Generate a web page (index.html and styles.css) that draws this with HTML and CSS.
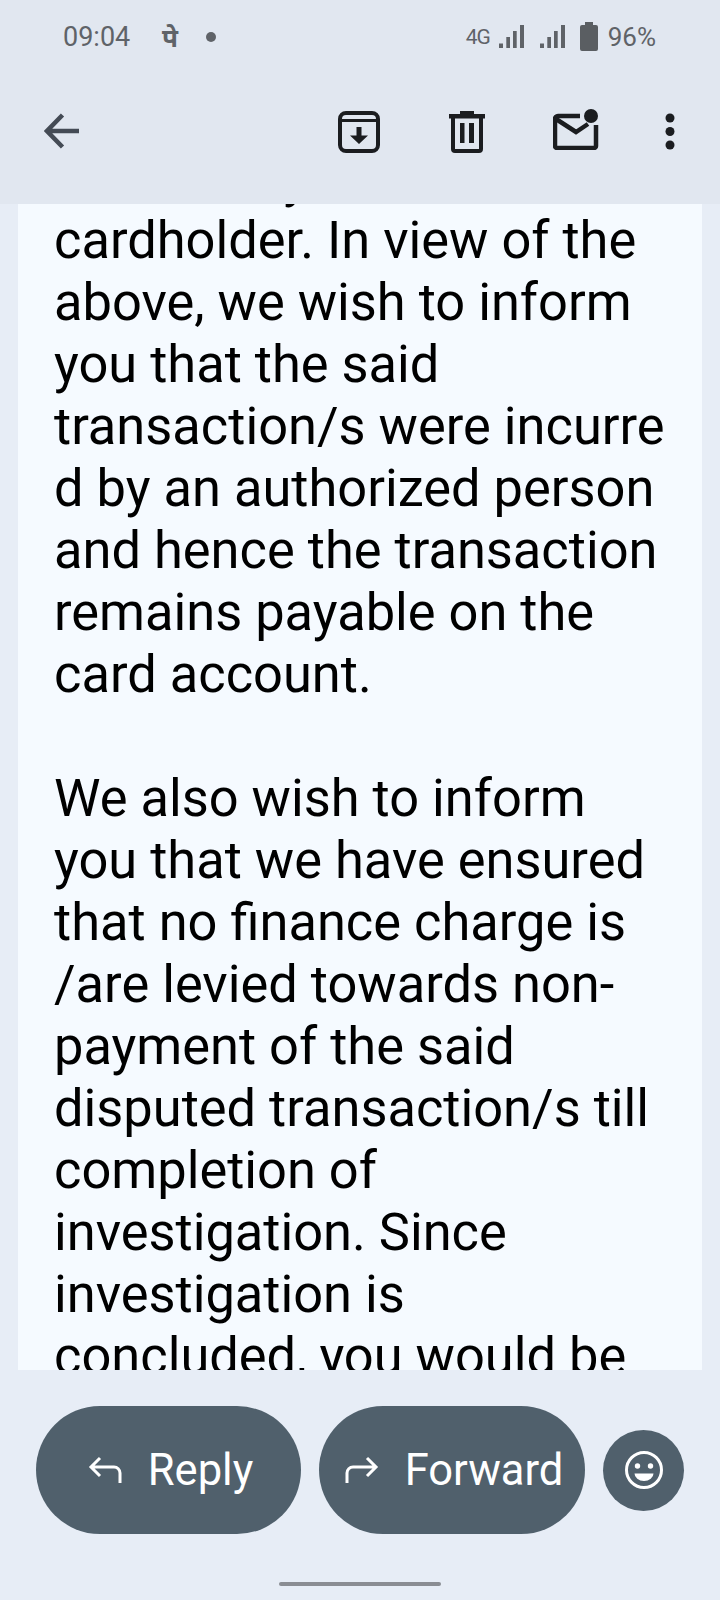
FILE: index.html
```html
<!DOCTYPE html>
<html lang="en">
<head>
<meta charset="utf-8">
<title>Message</title>
<link rel="stylesheet" href="styles.css">
</head>
<body>
<div class="phone">
  <header class="top">
    <div class="status">
      <div class="status-left">
        <span class="time">09:04</span>
        <span class="notif">पे</span>
        <span class="dot"></span>
      </div>
      <div class="status-right">
        <span class="net">4G</span>
        <svg class="signal" viewBox="0 0 25 23"><path d="M0 18.500h4V23H0zM7.300 12h3.700v11H7.300zM14 6h3.700v17H14zM21 0h4v23h-4z"/></svg>
        <svg class="signal signal-b" viewBox="0 0 25 23"><path d="M0 18.500h4V23H0zM7.300 12h3.700v11H7.300zM14 6h3.700v17H14zM21 0h4v23h-4z"/></svg>
        <svg class="battery" viewBox="0 0 18 29"><path d="M5 0h8v3h3a2 2 0 0 1 2 2v22a2 2 0 0 1-2 2H2a2 2 0 0 1-2-2V5a2 2 0 0 1 2-2h3z"/></svg>
        <span class="pct">96%</span>
      </div>
    </div>
    <nav class="toolbar">
      <svg class="back" viewBox="0 0 36 36"><path d="M35 18H3.500M18.500 2 3 18l15.500 16" fill="none" stroke="currentColor" stroke-width="4.500"/></svg>
      <div class="actions">
        <svg class="ic-archive" viewBox="0 0 42 42"><rect x="2" y="2" width="38" height="38" rx="6" fill="none" stroke="currentColor" stroke-width="4"/><path d="M3 9.500h36" fill="none" stroke="currentColor" stroke-width="3"/><path d="M18.500 16h5v8.500h6.500L21 33l-9-8.500h6.500z"/></svg>
        <svg class="ic-trash" viewBox="0 0 36 42"><path d="M11 0h14v3h11v4.500H0V3h11z"/><path d="M4 5v33a2 2 0 0 0 2 2h24a2 2 0 0 0 2-2V5" fill="none" stroke="currentColor" stroke-width="4"/><path d="M11 12h4.500v20H11zM20 12h5v20h-5z"/></svg>
        <svg class="ic-mail" viewBox="0 0 46 41"><path d="M27 7H5a3 3 0 0 0-3 3v27a2 2 0 0 0 2 2h37a2 2 0 0 0 2-2V16" fill="none" stroke="currentColor" stroke-width="4.500"/><path d="m3 10 20 13 12-8" fill="none" stroke="currentColor" stroke-width="4.500"/><circle cx="38" cy="7" r="7"/></svg>
        <svg class="ic-more" viewBox="0 0 10 37"><circle cx="5" cy="5" r="4.500"/><circle cx="5" cy="18.500" r="4.500"/><circle cx="5" cy="32" r="4.500"/></svg>
      </div>
    </nav>
  </header>
  <main class="body">
    <article class="card">
      <p class="msg">initiated by the<br>cardholder. In view of the<br>above, we wish to inform<br>you that the said<br>transaction/s were incurre<br>d by an authorized person<br>and hence the transaction<br>remains payable on the<br>card account.<br><br>We also wish to inform<br>you that we have ensured<br>that no finance charge is<br>/are levied towards non-<br>payment of the said<br>disputed transaction/s till<br>completion of<br>investigation. Since<br>investigation is<br>concluded, you would be</p>
    </article>
  </main>
  <footer class="bottom">
    <div class="buttons">
      <button class="pill pill-reply">
        <svg class="pill-ic" viewBox="0 0 34 28"><path d="M32 27V17a6 6 0 0 0-6-6H3M12 2 3 11l9 9" fill="none" stroke="currentColor" stroke-width="3"/></svg>
        <span>Reply</span>
      </button>
      <button class="pill pill-forward">
        <svg class="pill-ic" viewBox="0 0 34 28"><path d="M2 27V17a6 6 0 0 1 6-6h23M22 2l9 9-9 9" fill="none" stroke="currentColor" stroke-width="3"/></svg>
        <span>Forward</span>
      </button>
      <button class="round">
        <svg class="smile" viewBox="0 0 38 38"><circle cx="19" cy="19" r="17.500" fill="none" stroke="currentColor" stroke-width="3"/><circle cx="12.500" cy="15" r="2.700" fill="currentColor"/><circle cx="25.500" cy="15" r="2.700" fill="currentColor"/><path d="M9.500 22.500h19a9.500 7.500 0 0 1-19 0z" fill="currentColor"/></svg>
      </button>
    </div>
    <div class="home"></div>
  </footer>
</div>
</body>
</html>
```

FILE: styles.css
```css
* { box-sizing: border-box; }
html, body { margin: 0; padding: 0; }
body { font-family: Roboto, "Liberation Sans", sans-serif; background: #e7edf6; }
.phone { width: 720px; height: 1600px; display: flex; flex-direction: column; overflow: hidden; }

.top { height: 204px; background: #e1e7f0; flex: none; }
.status { height: 73px; display: flex; justify-content: space-between; align-items: center; padding: 0 64px 0 63px; color: #5f6368; }
.status-left, .status-right { display: flex; align-items: center; }
.time { font-size: 27px; width: 67px; }
.notif { font-size: 26px; font-weight: 700; margin-left: 32px; width: 20px; font-family: "Noto Sans", "DejaVu Sans", sans-serif; }
.dot { width: 10px; height: 10px; border-radius: 50%; background: #5f6368; margin-left: 24px; }
.net { font-size: 21px; width: 23px; letter-spacing: -1px; white-space: nowrap; }
.signal { width: 25px; height: 23px; fill: #5f6368; margin-left: 10px; }
.signal-b { margin-left: 16px; }
.battery { width: 18px; height: 29px; fill: #5a5e62; margin-left: 15px; }
.pct { font-size: 26px; margin-left: 10px; }

.toolbar { height: 131px; display: flex; align-items: flex-start; justify-content: space-between; padding: 36px 45px 0 44px; color: #1b1d20; fill: #1b1d20; }
.back { width: 36px; height: 36px; color: #444b55; margin-top: 4px; }
.actions { display: flex; align-items: flex-start; }
.ic-archive { width: 42px; height: 42px; margin-top: 2px; }
.ic-trash { width: 36px; height: 42px; margin-left: 69px; margin-top: 2px; }
.ic-mail { width: 46px; height: 41px; margin-left: 68px; }
.ic-more { width: 10px; height: 37px; margin-left: 66px; margin-top: 4px; }

.body { flex: none; height: 1166px; padding: 0 18px; overflow: hidden; }
.card { height: 100%; background: #f5faff; padding: 0 0 0 36px; overflow: hidden; }
.msg { margin: -57px 0 0; font-size: 52.400px; line-height: 62px; color: #000; white-space: nowrap; }

.bottom { flex: 1; display: flex; flex-direction: column; }
.buttons { display: flex; align-items: center; gap: 18px; padding: 36px 36px 0; }
.pill { height: 128px; flex: none; border: 0; border-radius: 64px; background: #50606c; color: #fff; display: flex; align-items: center; justify-content: center; gap: 26px; font-family: Roboto, sans-serif; font-size: 43.500px; font-weight: 400; padding: 0 0 0 4px; }
.pill-reply { width: 265px; }
.pill-forward { width: 266px; }
.pill-ic { width: 34px; height: 28px; }
.round { width: 81px; height: 81px; flex: none; border: 0; border-radius: 50%; background: #50606c; color: #fff; display: flex; align-items: center; justify-content: center; padding: 0; }
.smile { width: 38px; height: 38px; }
.home { width: 162px; height: 4px; margin: 48px auto 0; border-radius: 2px; background: #8a8d93; }
```
